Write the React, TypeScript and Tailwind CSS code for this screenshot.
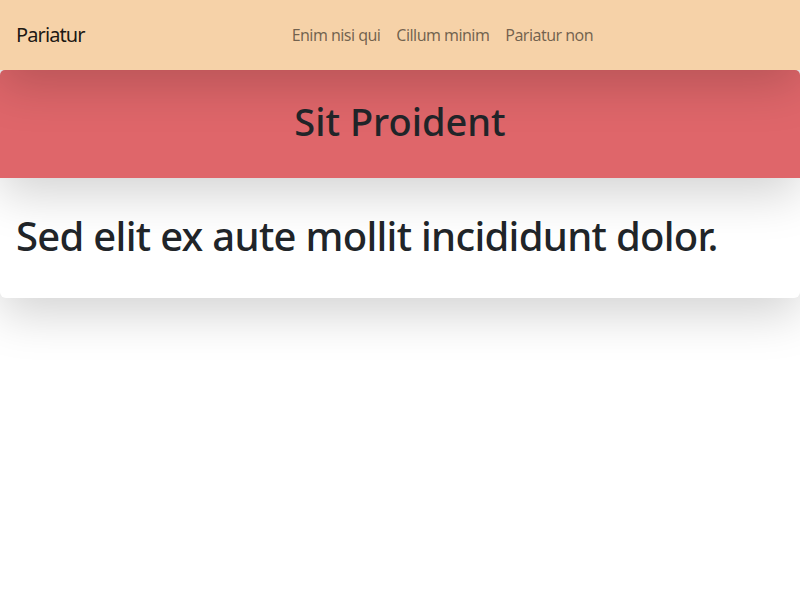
export default function App() {
  return (
    <div
      className="min-h-[600px] bg-white text-[#212529]"
      style={{ fontFamily: '"Noto Sans", "Open Sans", "Liberation Sans", Arial, sans-serif' }}
    >
      <nav className="relative z-20 flex h-[70px] items-center bg-[#f6d2a8] px-4 shadow-[0_1rem_3rem_rgba(0,0,0,0.175)]">
        <a className="mr-4 text-[20px] leading-[30px] tracking-[-0.9px] text-black/90">Pariatur</a>
        <ul className="mx-auto flex text-[16px] leading-6 tracking-[-0.55px] text-black/55">
          <li className="px-2">Enim nisi qui</li>
          <li className="px-2">Cillum minim</li>
          <li className="px-2">Pariatur non</li>
        </ul>
      </nav>
      <div className="relative z-10 rounded-[6px] bg-white shadow-[0_1rem_3rem_rgba(0,0,0,0.175)]">
        <div className="relative z-10 flex h-[108px] items-center justify-center rounded-t-[5px] bg-[#df666a] pb-[4px] shadow-[0_1rem_3rem_rgba(0,0,0,0.175)]">
          <h2 className="text-[38px] font-medium leading-[1.2] tracking-[0px]">Sit Proident</h2>
        </div>
        <div className="flex h-[120px] items-center px-4 pb-[4px]">
          <h1 className="text-[40px] font-medium leading-[1.2] tracking-[-0.7px]">Sed elit ex aute mollit incididunt dolor.</h1>
        </div>
      </div>
    </div>
  );
}
